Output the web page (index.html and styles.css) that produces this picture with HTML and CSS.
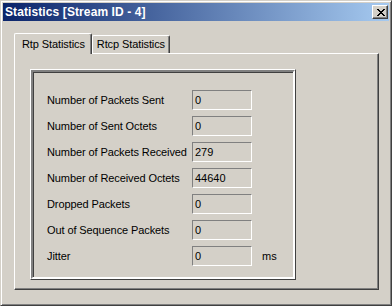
FILE: index.html
```html
<!DOCTYPE html>
<html lang="en">
<head>
  <meta charset="UTF-8" />
  <title>Statistics [Stream ID - 4]</title>
  <link rel="stylesheet" href="styles.css">
</head>
<body>
  <div class="window">
    <div class="titlebar">
      <span class="title">Statistics [Stream ID - 4]</span>
      <div class="close-btn">
        <svg width="8" height="7" viewBox="0 0 8 7">
          <path d="M0 0h2v1h1v1h2v-1h1v-1h2v1h-1v1h-1v1h-1v1h1v1h1v1h1v1h-2v-1h-1v-1h-2v1h-1v1h-2v-1h1v-1h1v-1h1v-1h-1v-1h-1v-1h-1z" fill="#000"/>
        </svg>
      </div>
    </div>

    <div class="content">
      <div class="tabs">
        <div class="tab active">Rtp Statistics</div>
        <div class="tab">Rtcp Statistics</div>
      </div>

      <div class="panel">
        <div class="group">
          <div class="group-inner">
            <div class="stat-row">
              <span class="label">Number of Packets Sent</span>
              <span class="field">0</span>
            </div>
            <div class="stat-row">
              <span class="label">Number of Sent Octets</span>
              <span class="field">0</span>
            </div>
            <div class="stat-row">
              <span class="label">Number of Packets Received</span>
              <span class="field">279</span>
            </div>
            <div class="stat-row">
              <span class="label">Number of Received Octets</span>
              <span class="field">44640</span>
            </div>
            <div class="stat-row">
              <span class="label">Dropped Packets</span>
              <span class="field">0</span>
            </div>
            <div class="stat-row">
              <span class="label">Out of Sequence Packets</span>
              <span class="field">0</span>
            </div>
            <div class="stat-row">
              <span class="label">Jitter</span>
              <span class="field">0</span>
              <span class="unit">ms</span>
            </div>
          </div>
        </div>
      </div>
    </div>
  </div>
</body>
</html>
```

FILE: styles.css
```css
body {
  margin: 0;
  font-family: 'Liberation Sans', Arial, sans-serif;
  font-size: 11px;
  color: #000;
  background: #d4d0c8;
}
.window {
  width: 392px;
  height: 306px;
  box-sizing: border-box;
  background: #d4d0c8;
  border: 1px solid;
  border-color: #d4d0c8 #404040 #404040 #d4d0c8;
  box-shadow: inset 1px 1px 0 #fff, inset -1px -1px 0 #808080;
  padding: 2px;
  display: flex;
  flex-direction: column;
}
.titlebar {
  height: 18px;
  flex-shrink: 0;
  display: flex;
  align-items: center;
  justify-content: space-between;
  padding: 0 1px 0 2px;
  background: linear-gradient(to right, #0a246a, #a6caf0);
}
.title {
  color: #fff;
  font-weight: bold;
  font-size: 12px;
  letter-spacing: 0.1px;
}
.close-btn {
  width: 16px;
  height: 14px;
  box-sizing: border-box;
  background: #d4d0c8;
  border: 1px solid;
  border-color: #fff #404040 #404040 #fff;
  box-shadow: inset -1px -1px 0 #808080;
  display: flex;
  align-items: center;
  justify-content: center;
}
.close-btn svg {
  margin-left: 1px;
}
.content {
  flex: 1;
  padding: 12px 10px 13px 11px;
  display: flex;
  flex-direction: column;
}
.tabs {
  display: flex;
  align-items: flex-end;
  height: 20px;
  position: relative;
  z-index: 1;
}
.tab {
  box-sizing: border-box;
  height: 18px;
  padding: 2px 4px 0 4px;
  border: 1px solid;
  border-bottom: none;
  border-color: #fff #404040 #404040 #fff;
  box-shadow: inset -1px 0 0 #808080;
  border-radius: 2px 2px 0 0;
  white-space: nowrap;
  letter-spacing: -0.1px;
}
.tab.active {
  height: 21px;
  margin-bottom: -1px;
  padding: 4px 6px 0 7px;
  background: #d4d0c8;
}
.panel {
  flex: 1;
  box-sizing: border-box;
  border: 1px solid;
  border-color: #fff #404040 #404040 #fff;
  box-shadow: inset -1px -1px 0 #808080;
  padding: 15px 0 0 15px;
}
.group {
  width: 266px;
  height: 211px;
  box-sizing: border-box;
  border: 1px solid;
  border-color: #fff #404040 #404040 #fff;
}
.group-inner {
  height: 100%;
  box-sizing: border-box;
  border: 2px solid;
  border-color: #808080 #fff #fff #808080;
  box-shadow: inset 1px 1px 0 #404040;
  padding: 18px 0 0 14px;
  display: flex;
  flex-direction: column;
  gap: 6px;
}
.stat-row {
  display: flex;
  align-items: center;
  height: 20px;
}
.label {
  width: 145px;
  flex-shrink: 0;
  letter-spacing: -0.1px;
}
.field {
  width: 60px;
  height: 20px;
  box-sizing: border-box;
  border: 1px solid;
  border-color: #808080 #fff #fff #808080;
  padding: 1px 0 0 2px;
  line-height: 16px;
}
.unit {
  margin-left: 10px;
}
```
